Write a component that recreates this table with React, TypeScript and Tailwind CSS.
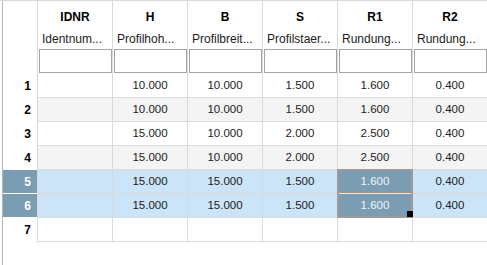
import React from 'react';

type Row = { id: number; vals: string[]; selected?: boolean };

const columns = [
  { key: 'IDNR', label: 'Identnum...' },
  { key: 'H', label: 'Profilhoh...' },
  { key: 'B', label: 'Profilbreit...' },
  { key: 'S', label: 'Profilstaer...' },
  { key: 'R1', label: 'Rundung...' },
  { key: 'R2', label: 'Rundung...' },
];

const rows: Row[] = [
  { id: 1, vals: ['', '10.000', '10.000', '1.500', '1.600', '0.400'] },
  { id: 2, vals: ['', '10.000', '10.000', '1.500', '1.600', '0.400'] },
  { id: 3, vals: ['', '15.000', '10.000', '2.000', '2.500', '0.400'] },
  { id: 4, vals: ['', '15.000', '10.000', '2.000', '2.500', '0.400'] },
  { id: 5, vals: ['', '15.000', '15.000', '1.500', '1.600', '0.400'], selected: true },
  { id: 6, vals: ['', '15.000', '15.000', '1.500', '1.600', '0.400'], selected: true },
  { id: 7, vals: ['', '', '', '', '', ''] },
];

const App: React.FC = () => {
  return (
    <div className="relative w-[487px] h-[265px] overflow-hidden bg-white font-['Liberation_Sans',Arial,sans-serif] text-[#1b1b1b]">
      <div className="h-px bg-[#dadada]" />
      <div className="ml-[2px] h-[264px] border-l border-[#a9b8c8]">
        {/* header */}
        <div className="grid grid-cols-[34px_repeat(6,75px)] h-[73px]">
          <div />
          {columns.map(col => (
            <div key={col.key} className="flex flex-col border-l border-[#dadada]">
              <div className="h-[30px] flex items-center justify-center pt-[2px] text-[12px] font-bold text-black">
                {col.key}
              </div>
              <div className="h-[16px] flex items-center pl-[4px] text-[12px] whitespace-nowrap overflow-hidden">
                {col.label}
              </div>
              <div className="pt-[2px] pl-[1px]">
                <div className="h-[24px] w-[73px] border border-[#a3a3a3] bg-white" />
              </div>
            </div>
          ))}
        </div>

        {/* body */}
        {rows.map(row => {
          const stripe = row.selected ? 'bg-[#cce4f7]' : row.id % 2 === 0 && row.id < 7 ? 'bg-[#f4f4f4]' : 'bg-white';
          return (
            <div key={row.id} className="grid grid-cols-[34px_repeat(6,75px)] h-[24px]">
              <div
                className={`flex items-center justify-end pr-[6px] text-[12px] font-bold border-b ${
                  row.selected ? 'bg-[#7b9db4] text-white border-white' : 'text-black border-transparent'
                }`}
              >
                {row.id}
              </div>
              {row.vals.map((v, i) => {
                const inRange = row.selected && i === 4;
                return (
                  <div
                    key={i}
                    className={`flex items-center justify-center text-[11.5px] border-l border-b border-[#dadada] ${
                      inRange ? 'bg-[#7b9db4] text-[#eef4fa] border-b-[#e4ecf2]' : stripe
                    }`}
                  >
                    {v}
                  </div>
                );
              })}
            </div>
          );
        })}
      </div>

      {/* selection outline */}
      <div className="absolute left-[337px] top-[169px] w-[76px] h-[49px] border-2 border-[#9b9b9b]">
        <div className="absolute left-0 right-0 top-[21px] border-t border-dotted border-[#d9893f]" />
        <div className="absolute -right-[2px] -bottom-[1px] w-[6px] h-[6px] bg-black" />
      </div>
    </div>
  );
};

export default App;
